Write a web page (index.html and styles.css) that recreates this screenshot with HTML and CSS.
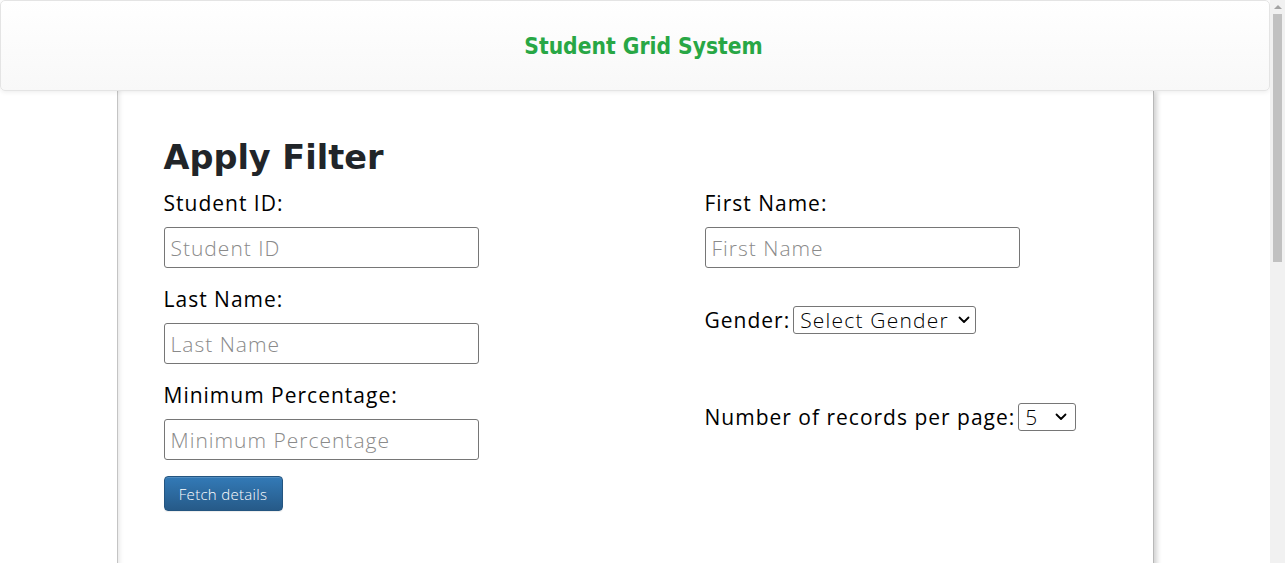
FILE: index.html
```html
<!DOCTYPE html>
<html lang="en">
<head>
<meta charset="utf-8">
<title>Student Grid System</title>
<link rel="stylesheet" href="styles.css">
</head>
<body>
<div class="page">
  <header class="navbar">
    <div class="brand">Student Grid System</div>
  </header>
  <main class="card">
    <h1 class="title">Apply Filter</h1>
    <form class="filters">
      <div class="field">
        <label class="label" for="sid">Student ID:</label>
        <input class="input" id="sid" type="text" placeholder="Student ID">
      </div>
      <div class="field">
        <label class="label" for="fname">First Name:</label>
        <input class="input" id="fname" type="text" placeholder="First Name">
      </div>
      <div class="field">
        <label class="label" for="lname">Last Name:</label>
        <input class="input" id="lname" type="text" placeholder="Last Name">
      </div>
      <div class="inline-field">
        <label class="label" for="gender">Gender:</label>
        <span class="select-wrap">
          <select class="select select-gender" id="gender">
            <option>Select Gender</option>
            <option>Male</option>
            <option>Female</option>
          </select>
          <svg class="chevron" width="12" height="8" viewBox="0 0 12 8" aria-hidden="true"><path d="M1.5 1.5 L6 6 L10.5 1.5" fill="none" stroke="#000" stroke-width="1.8" stroke-linecap="round" stroke-linejoin="round"/></svg>
        </span>
      </div>
      <div class="field">
        <label class="label" for="pct">Minimum Percentage:</label>
        <input class="input" id="pct" type="text" placeholder="Minimum Percentage">
        <button class="btn" type="button">Fetch details</button>
      </div>
      <div class="inline-field inline-field-last">
        <label class="label" for="per">Number of records per page:</label>
        <span class="select-wrap">
          <select class="select select-small" id="per">
            <option>5</option>
            <option>10</option>
            <option>20</option>
          </select>
          <svg class="chevron" width="12" height="8" viewBox="0 0 12 8" aria-hidden="true"><path d="M1.5 1.5 L6 6 L10.5 1.5" fill="none" stroke="#000" stroke-width="1.8" stroke-linecap="round" stroke-linejoin="round"/></svg>
        </span>
      </div>
    </form>
  </main>
</div>
<div class="scrollbar" aria-hidden="true">
  <div class="sb-arrow sb-up"></div>
  <div class="sb-thumb"></div>
</div>
</body>
</html>
```
FILE: styles.css
```css
html, body {
  margin: 0;
  padding: 0;
  background: #fff;
  overflow: hidden;
}

body {
  font-family: "Open Sans", "Liberation Sans", sans-serif;
  color: #000;
}

.page {
  width: 1270px;
  height: 563px;
  overflow: hidden;
}

.navbar {
  position: relative;
  z-index: 2;
  height: 89px;
  padding-left: 17px;
  border: 1px solid #e4e4e4;
  border-radius: 5px;
  background: linear-gradient(to bottom, #ffffff 0%, #f8f8f8 100%);
  box-shadow: 0 1px 5px rgba(0, 0, 0, 0.08);
  display: flex;
  align-items: center;
  justify-content: center;
}

.brand {
  font-family: "DejaVu Sans Condensed", "DejaVu Sans", sans-serif;
  font-stretch: condensed;
  font-weight: bold;
  font-size: 22.6px;
  color: #28a745;
}

.card {
  position: relative;
  z-index: 1;
  width: 1037px;
  min-height: 1124px;
  margin: 0 auto;
  box-sizing: border-box;
  padding: 47px 46px 40px 46px;
  background: #fff;
  border-left: 1px solid #c4c4c4;
  border-right: 1px solid #b8b8b8;
  box-shadow: inset 5px 0 5px -4px rgba(0, 0, 0, 0.12), 4px 0 5px -1px rgba(0, 0, 0, 0.18);
}

.title {
  margin: 0 0 13px 0;
  font-family: "DejaVu Sans", sans-serif;
  font-weight: bold;
  font-size: 33.5px;
  line-height: 40px;
  color: #212529;
}

.filters {
  display: grid;
  grid-template-columns: 404px 404px;
  column-gap: 137px;
  row-gap: 19px;
  align-items: start;
}

.label {
  font-size: 21px;
  line-height: 24px;
  letter-spacing: 1px;
  color: #000;
}

.field .label {
  display: block;
  margin-bottom: 12px;
}

.input {
  display: block;
  box-sizing: border-box;
  width: 315px;
  height: 41px;
  margin: 0;
  padding: 0 6px;
  border: 1px solid #767676;
  border-radius: 3px;
  font-family: "Open Sans", "Liberation Sans", sans-serif;
  font-weight: 300;
  font-size: 21px;
  letter-spacing: 1px;
  color: #000;
  background: #fff;
}

.input::placeholder {
  color: #8a8a8a;
}

.inline-field {
  display: flex;
  align-items: center;
  gap: 3px;
  margin-top: 19px;
}

.inline-field-last {
  margin-top: 20px;
}

.select-wrap {
  position: relative;
  display: inline-block;
  height: 28px;
}

.select {
  -webkit-appearance: none;
  appearance: none;
  display: block;
  box-sizing: border-box;
  height: 28px;
  margin: 0;
  padding: 0 20px 0 6px;
  border: 1px solid #767676;
  border-radius: 3px;
  font-family: "Open Sans", "Liberation Sans", sans-serif;
  font-weight: 300;
  font-size: 21px;
  line-height: 26px;
  letter-spacing: 1.2px;
  color: #000;
  background: #fff;
}

.chevron {
  position: absolute;
  right: 6px;
  top: 10px;
  pointer-events: none;
}

.select-gender {
  width: 183px;
}

.select-small {
  width: 58px;
}

.select-small + .chevron {
  right: 9px;
}

.btn {
  display: block;
  box-sizing: border-box;
  width: 119px;
  height: 35px;
  margin-top: 16px;
  padding: 0;
  border: 1px solid #245580;
  border-radius: 4px;
  background: linear-gradient(to bottom, #337ab7 0%, #265a88 100%);
  box-shadow: inset 0 1px 0 rgba(255, 255, 255, 0.15), 0 1px 1px rgba(0, 0, 0, 0.075);
  color: #fff;
  font-family: "Open Sans", "Liberation Sans", sans-serif;
  font-weight: 300;
  font-size: 15px;
  letter-spacing: 0.3px;
  cursor: pointer;
}

.scrollbar {
  position: fixed;
  top: 0;
  right: 0;
  width: 15px;
  height: 563px;
  background: #f1f1f1;
  display: flex;
  flex-direction: column;
  align-items: center;
}

.sb-arrow {
  width: 0;
  height: 0;
  border-left: 4px solid transparent;
  border-right: 4px solid transparent;
}

.sb-up {
  margin-top: 5px;
  border-bottom: 4px solid #a3a3a3;
}

.sb-thumb {
  width: 9px;
  height: 248px;
  margin-top: 5px;
  background: #c1c1c1;
}
```
